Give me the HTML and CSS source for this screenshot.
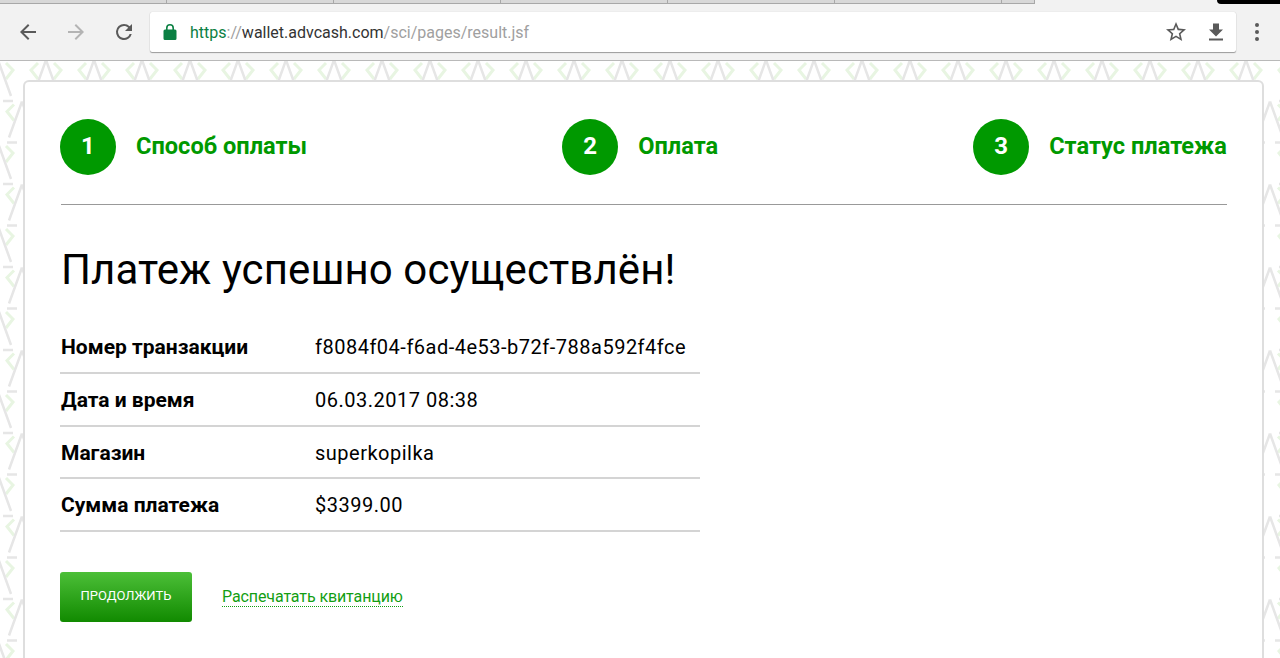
FILE: index.html
```html
<!DOCTYPE html>
<html lang="ru">
<head>
  <meta charset="UTF-8">
  <title>Статус платежа</title>
  <meta name="viewport" content="width=device-width, initial-scale=1.0">
  <link rel="stylesheet" href="styles.css">
</head>
<body>
  <!-- browser chrome -->
  <div class="tabstrip">
    <div class="tab"></div>
    <div class="tab"></div>
    <div class="tab"></div>
    <div class="tab"></div>
    <div class="tab"></div>
    <div class="tab"></div>
    <div class="tab tab-small"></div>
    <div class="tab-spacer"></div>
    <div class="tab-corner"></div>
  </div>
  <div class="toolbar">
    <svg class="nav-icon" viewBox="0 0 24 24"><path fill="#5a5a5a" d="M20 11H7.830l5.590-5.590L12 4l-8 8 8 8 1.410-1.410L7.830 13H20v-2z"/></svg>
    <svg class="nav-icon" viewBox="0 0 24 24"><path fill="#b4b4b4" d="M4 11h12.170l-5.590-5.590L12 4l8 8-8 8-1.410-1.410L16.170 13H4v-2z"/></svg>
    <svg class="nav-icon" viewBox="0 0 24 24"><path fill="#5a5a5a" d="M17.650 6.350A7.960 7.960 0 0 0 12 4a8 8 0 1 0 7.730 10h-2.080A6 6 0 1 1 12 6c1.660 0 3.140.690 4.220 1.780L13 11h7V4l-2.350 2.350z"/></svg>
    <div class="omnibox">
      <svg class="lock" viewBox="0 0 14 16"><path fill="#0b8043" d="M12 5.500h-1V4a4 4 0 0 0-8 0v1.500H2A1.500 1.500 0 0 0 .5 7v7.500A1.500 1.500 0 0 0 2 16h10a1.500 1.500 0 0 0 1.500-1.500V7A1.500 1.500 0 0 0 12 5.500zM4.600 5.500V4a2.400 2.400 0 0 1 4.800 0v1.500H4.600z"/></svg>
      <div class="url"><span class="url-scheme">https</span><span class="url-muted">://</span><span class="url-host">wallet.advcash.com</span><span class="url-muted">/sci/pages/result.jsf</span></div>
      <svg class="omni-icon star" viewBox="0 0 24 24"><path fill="#5a5a5a" d="M22 9.240l-7.190-.620L12 2 9.190 8.630 2 9.240l5.460 4.730L5.820 21 12 17.270 18.180 21l-1.630-7.030L22 9.240zM12 15.400l-3.760 2.270 1-4.280-3.320-2.880 4.380-.38L12 6.100l1.710 4.040 4.380.38-3.320 2.880 1 4.280L12 15.400z"/></svg>
      <svg class="omni-icon" viewBox="0 0 24 24"><path fill="#5a5a5a" d="M19 9.500h-4V3.500H9v6H5l7 7 7-7zM5 18.500v2h14v-2H5z"/></svg>
    </div>
    <div class="menu-dots"><span></span><span></span><span></span></div>
  </div>

  <div class="page">
    <!-- hex background sits under the card -->
    <svg class="page-bg" width="100%" height="100%">
      <defs>
        <g id="motif">
          <path d="M-8 3 L-15 10 L-8 19 M8 3 L15 10 L8 19" fill="none" stroke="#e8f5e2" stroke-width="3"/>
          <path d="M0 0 L-13 36 M0 0 L13 36 M-15 41 H-5 M5 41 H15" fill="none" stroke="#e6e6e6" stroke-width="2.500"/>
        </g>
        <pattern id="hex" x="22" y="-1" width="48" height="83" patternUnits="userSpaceOnUse">
          <use href="#motif" x="24" y="0"/>
          <use href="#motif" x="24" y="83"/>
          <use href="#motif" x="0" y="41.500"/>
          <use href="#motif" x="48" y="41.500"/>
          <use href="#motif" x="0" y="-41.500"/>
          <use href="#motif" x="48" y="-41.500"/>
        </pattern>
      </defs>
      <rect width="100%" height="100%" fill="url(#hex)"/>
    </svg>

    <div class="card">
      <div class="steps">
        <div class="step"><span class="step-num">1</span><span class="step-name">Способ оплаты</span></div>
        <div class="step"><span class="step-num">2</span><span class="step-name">Оплата</span></div>
        <div class="step"><span class="step-num">3</span><span class="step-name">Статус платежа</span></div>
      </div>

      <h1>Платеж успешно осуществлён!</h1>

      <div class="details">
        <div class="row"><div class="row-label">Номер транзакции</div><div class="row-value">f8084f04-f6ad-4e53-b72f-788a592f4fce</div></div>
        <div class="row"><div class="row-label">Дата и время</div><div class="row-value">06.03.2017 08:38</div></div>
        <div class="row"><div class="row-label">Магазин</div><div class="row-value">superkopilka</div></div>
        <div class="row"><div class="row-label">Сумма платежа</div><div class="row-value">$3399.00</div></div>
      </div>

      <div class="actions">
        <button type="button" class="main-btn">Продолжить</button>
        <a href="#" class="print-link">Распечатать квитанцию</a>
      </div>
    </div>
  </div>
</body>
</html>
```

FILE: styles.css
```css
html, body {
  margin: 0;
  height: 658px;
  overflow: hidden;
}
body {
  font-family: Roboto, "Liberation Sans", sans-serif;
  background-color: #fff;
  color: #000;
}

/* browser chrome */
.tabstrip {
  display: flex;
  height: 4px;
  background-color: #f2f2f2;
}
.tab {
  width: 166px;
  background-color: #d8d8d8;
  border-bottom: 1px solid #a8a8a8;
  border-right: 1px solid #a8a8a8;
}
.tab-small {
  width: 32px;
}
.tab-spacer {
  flex: 1;
}
.tab-corner {
  width: 63px;
  background-color: #000;
  border-bottom-left-radius: 4px;
}
.toolbar {
  display: flex;
  align-items: center;
  height: 57px;
  padding: 0 21px 0 16px;
  box-sizing: border-box;
  background-color: #f2f2f2;
  border-bottom: 1px solid #b9b9b9;
}
.nav-icon {
  width: 24px;
  height: 24px;
  margin-right: 24px;
  flex-shrink: 0;
}
.omnibox {
  display: flex;
  align-items: center;
  flex: 1;
  height: 40px;
  margin-left: -10px;
  margin-right: 19px;
  padding: 0 0 0 13px;
  background-color: #fff;
  border-radius: 2px;
  box-shadow: 0 1px 1px rgba(0, 0, 0, 0.35), 0 0 1px rgba(0, 0, 0, 0.2);
}
.lock {
  width: 14px;
  height: 16px;
  margin-right: 13px;
}
.url {
  flex: 1;
  font-size: 16px;
  color: #a0a0a0;
}
.url-scheme {
  color: #0b8043;
}
.url-host {
  color: #333;
}
.omni-icon {
  width: 24px;
  height: 24px;
  margin-right: 8px;
}
.star {
  margin-right: 16px;
}
.menu-dots {
  display: flex;
  flex-direction: column;
  gap: 3px;
  width: 4px;
}
.menu-dots span {
  width: 4px;
  height: 4px;
  border-radius: 50%;
  background-color: #5a5a5a;
}

/* page */
.page {
  position: relative;
  height: 597px;
  overflow: hidden;
  padding: 21px 17px 0 25px;
  box-sizing: border-box;
}
.page-bg {
  position: absolute;
  top: 0;
  left: 0;
}
.card {
  position: relative;
  height: 620px;
  padding: 37px 36px 0;
  margin-right: 1px;
  background-color: #fff;
  border-radius: 4px;
  box-shadow: 0 0 0 2px #dedede;
}
.steps {
  display: flex;
  justify-content: space-between;
  margin-right: -1px;
  padding-bottom: 29px;
  border-bottom: 1px solid #999;
}
.step {
  display: flex;
  align-items: center;
  gap: 20px;
}
.step-num {
  display: flex;
  justify-content: center;
  align-items: center;
  width: 56px;
  height: 56px;
  margin-left: -1px;
  padding-bottom: 2px;
  box-sizing: border-box;
  border-radius: 50%;
  background-color: #009900;
  color: #fff;
  font-size: 24px;
  font-weight: 700;
}
.step-name {
  padding-bottom: 2px;
  font-size: 23.600px;
  font-weight: 700;
  color: #009900;
}
h1 {
  margin: 36px 0 0;
  font-size: 42px;
  font-weight: 400;
  line-height: 58px;
  letter-spacing: 0.1px;
}
.details {
  width: 640px;
  margin-top: 22px;
  margin-left: -1px;
}
.row {
  display: flex;
  align-items: center;
  height: 53px;
  padding: 1px 0 0 1px;
  box-sizing: border-box;
  border-bottom: 2px solid #d4d4d4;
  font-size: 20px;
}
.row:nth-child(3) {
  height: 52px;
}
.row-label {
  width: 254px;
  font-size: 21px;
  font-weight: 700;
}
.row-value {
  letter-spacing: 0.5px;
}
.actions {
  display: flex;
  align-items: center;
  gap: 30px;
  margin: 40px 0 0 -1px;
}
.main-btn {
  width: 132px;
  height: 50px;
  padding: 0 0 4px;
  border: none;
  border-radius: 3px;
  background: linear-gradient(#4cbf38, #118a00);
  color: #fff;
  font-family: inherit;
  font-size: 13px;
  text-transform: uppercase;
  cursor: pointer;
}
.print-link {
  color: #129e12;
  font-size: 16px;
  letter-spacing: -0.1px;
  text-decoration: none;
  border-bottom: 1px dotted #129e12;
}
```
